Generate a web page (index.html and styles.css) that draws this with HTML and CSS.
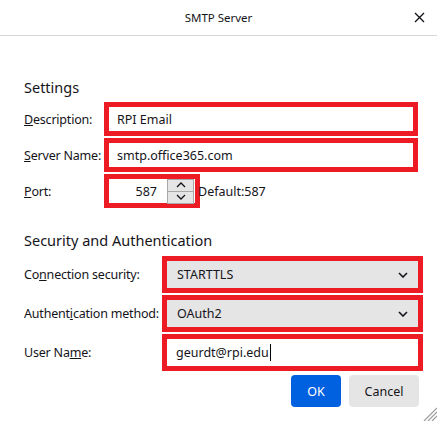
FILE: index.html
```html
<!DOCTYPE html>
<html lang="en">
<head>
  <meta charset="UTF-8">
  <meta name="viewport" content="width=device-width, initial-scale=1.0">
  <title>SMTP Server</title>
  <link rel="stylesheet" href="styles.css">
</head>
<body>
  <div class="dialog">
    <header class="titlebar">
      <span class="title">SMTP Server</span>
      <span class="close">
        <svg width="11" height="11" viewBox="0 0 11 11"><path d="M1 1L10 10M10 1L1 10" stroke="#15141a" stroke-width="1.4" fill="none"/></svg>
      </span>
    </header>

    <main class="content">
      <h2 class="section-title">Settings</h2>
      <div class="form-grid settings-grid">
        <label><u>D</u>escription:</label>
        <div class="mark">RPI Email</div>

        <label><u>S</u>erver Name:</label>
        <div class="mark">smtp.office365.com</div>

        <label><u>P</u>ort:</label>
        <div class="port-row">
          <div class="mark port">
            <span class="port-value">587</span>
            <span class="spinner">
              <span class="spin-btn">
                <svg width="10" height="6" viewBox="0 0 10 6"><path d="M1 5L5 1L9 5" stroke="#15141a" stroke-width="1.3" fill="none"/></svg>
              </span>
              <span class="spin-btn">
                <svg width="10" height="6" viewBox="0 0 10 6"><path d="M1 1L5 5L9 1" stroke="#15141a" stroke-width="1.3" fill="none"/></svg>
              </span>
            </span>
          </div>
          <span class="default-note">Default:587</span>
        </div>
      </div>

      <h2 class="section-title security-title">Security and Authentication</h2>
      <div class="form-grid security-grid">
        <label>Co<u>n</u>nection security:</label>
        <div class="mark select">
          <span>STARTTLS</span>
          <svg width="10" height="6" viewBox="0 0 10 6"><path d="M1 1L5 5L9 1" stroke="#15141a" stroke-width="1.6" fill="none"/></svg>
        </div>

        <label>Authent<u>i</u>cation method:</label>
        <div class="mark select">
          <span>OAuth2</span>
          <svg width="10" height="6" viewBox="0 0 10 6"><path d="M1 1L5 5L9 1" stroke="#15141a" stroke-width="1.6" fill="none"/></svg>
        </div>

        <label>User Na<u>m</u>e:</label>
        <div class="mark user">geurdt@rpi.edu<span class="caret"></span></div>
      </div>

      <div class="actions">
        <button class="btn btn-primary">OK</button>
        <button class="btn">Cancel</button>
      </div>
    </main>

    <!-- resize grip -->
    <svg class="grip" width="15" height="15" viewBox="0 0 15 15">
      <path d="M15 2L2 15M15 6L6 15M15 10L10 15" stroke="#9a9a9a" stroke-width="1.2"/>
    </svg>
  </div>
</body>
</html>
```

FILE: styles.css
```css
* {
  box-sizing: border-box;
}

body {
  margin: 0;
  font-family: "Noto Sans", "Open Sans", sans-serif;
  font-size: 12.5px;
  color: #15141a;
  background-color: #fff;
}

.dialog {
  position: relative;
  width: 437px;
  height: 421px;
  overflow: hidden;
}

.titlebar {
  height: 36px;
  border-bottom: 1px solid #d7d7db;
  display: grid;
  grid-template-columns: 1fr auto 1fr;
  align-items: center;
}

.title {
  grid-column: 2;
  font-size: 11.5px;
}

.close {
  grid-column: 3;
  justify-self: end;
  margin-right: 12px;
  display: flex;
}

.content {
  padding: 0 19px 0 24px;
}

.section-title {
  margin: 41px 0 5px;
  font-size: 14.5px;
  font-weight: normal;
  line-height: 20px;
}

.security-title {
  margin: 22px 0 6px;
}

.form-grid {
  display: grid;
  row-gap: 2px;
  align-items: center;
}

.form-grid label {
  white-space: nowrap;
  letter-spacing: -0.2px;
}

.settings-grid {
  grid-template-columns: 80px 1fr;
  grid-auto-rows: 34px;
}

.security-grid {
  grid-template-columns: 138px 1fr;
  grid-auto-rows: 37px;
  margin-right: -5px;
}

/* red highlight frame around each field */
.mark {
  height: 100%;
  border: 5px solid #ed1c24;
  background-color: #fff;
  display: flex;
  align-items: center;
  padding: 0 8px;
}

.port-row {
  height: 100%;
  display: flex;
  align-items: center;
}

.mark.port {
  width: 96px;
  justify-content: flex-end;
  padding: 0 1px 0 0;
}

.port-value {
  margin-right: 10px;
}

.spinner {
  width: 27px;
  height: 25px;
  border: 1px solid #a8a8a8;
  background-color: #e5e5e5;
  display: flex;
  flex-direction: column;
}

.spin-btn {
  flex: 1;
  display: flex;
  align-items: center;
  justify-content: center;
}

.spin-btn + .spin-btn {
  border-top: 1px solid #a8a8a8;
}

.default-note {
  margin-left: -2px;
}

.mark.select {
  background-color: #e5e5e5;
  justify-content: space-between;
  padding: 0 10px 0 10px;
}

.mark.user {
  padding-left: 9px;
}

.caret {
  display: inline-block;
  width: 1px;
  height: 17px;
  background-color: #000;
  margin-left: 1px;
}

.actions {
  display: flex;
  justify-content: flex-end;
  gap: 8px;
  margin-top: 4px;
  margin-right: -1px;
}

.btn {
  height: 32px;
  width: 70px;
  border: none;
  border-radius: 4px;
  font-family: inherit;
  font-size: 12.5px;
  color: #15141a;
  background-color: #e5e5e5;
}

.btn-primary {
  width: 50px;
  background-color: #0061e0;
  color: #fff;
}

.grip {
  position: absolute;
  right: 0;
  bottom: 0;
}
```
